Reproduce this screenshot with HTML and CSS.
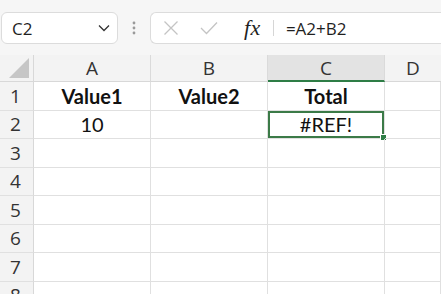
FILE: index.html
```html
<!DOCTYPE html>
<html lang="en">
<head>
  <meta charset="UTF-8" />
  <title>Sheet - #REF!</title>
  <link rel="stylesheet" href="styles.css">
</head>
<body>
  <div class="toolbar">
    <div class="namebox">
      <span>C2</span>
      <svg class="chev" width="12" height="8" viewBox="0 0 12 8"><path d="M1 1.5 L6 6.5 L11 1.5" fill="none" stroke="#333" stroke-width="1.3"/></svg>
    </div>
    <div class="grip">
      <svg width="4" height="14" viewBox="0 0 4 14"><circle cx="2" cy="2" r="1.4" fill="#9a9a9a"/><circle cx="2" cy="7" r="1.4" fill="#9a9a9a"/><circle cx="2" cy="12" r="1.4" fill="#9a9a9a"/></svg>
    </div>
    <div class="formula">
      <svg class="ico" width="16" height="16" viewBox="0 0 16 16"><path d="M1.5 1.5 L14.5 14.5 M14.5 1.5 L1.5 14.5" stroke="#c4c4c4" stroke-width="1.3"/></svg>
      <svg class="ico check" width="18" height="14" viewBox="0 0 18 14"><path d="M1 7 L6.5 12.5 L17 1.5" fill="none" stroke="#c4c4c4" stroke-width="1.3"/></svg>
      <span class="fx">fx</span>
      <span class="sep"></span>
      <span class="ftext">=A2+B2</span>
    </div>
  </div>

  <div class="sheet">
    <div class="corner"><span class="tri"></span></div>
    <div class="colhead">A</div>
    <div class="colhead">B</div>
    <div class="colhead active">C</div>
    <div class="colhead last">D</div>

    <div class="rowhead">1</div>
    <div class="cell bold">Value1</div>
    <div class="cell bold">Value2</div>
    <div class="cell bold">Total</div>
    <div class="cell"></div>

    <div class="rowhead">2</div>
    <div class="cell">10</div>
    <div class="cell"></div>
    <div class="cell selected">#REF!<span class="handle"></span></div>
    <div class="cell"></div>

    <div class="rowhead">3</div>
    <div class="cell"></div><div class="cell"></div><div class="cell"></div><div class="cell"></div>
    <div class="rowhead">4</div>
    <div class="cell"></div><div class="cell"></div><div class="cell"></div><div class="cell"></div>
    <div class="rowhead">5</div>
    <div class="cell"></div><div class="cell"></div><div class="cell"></div><div class="cell"></div>
    <div class="rowhead">6</div>
    <div class="cell"></div><div class="cell"></div><div class="cell"></div><div class="cell"></div>
    <div class="rowhead">7</div>
    <div class="cell"></div><div class="cell"></div><div class="cell"></div><div class="cell"></div>
    <div class="rowhead">8</div>
    <div class="cell"></div><div class="cell"></div><div class="cell"></div><div class="cell"></div>
  </div>
</body>
</html>
```

FILE: styles.css
```css
* { box-sizing: border-box; }
body { margin: 0; width: 441px; height: 294px; overflow: hidden; background: #fff; font-family: "Open Sans", sans-serif; color: #1f1f1f; }

.toolbar { height: 55px; background: #f6f6f6; display: flex; align-items: flex-start; padding: 12px 0 0 1px; }
.namebox { width: 117px; height: 32px; background: #fff; border: 1px solid #dcdcdc; border-radius: 6px; display: flex; align-items: center; justify-content: space-between; padding: 0 7px 0 10px; font-size: 17px; }
.grip { width: 32px; height: 32px; display: flex; align-items: center; justify-content: center; }
.formula { flex: 1; height: 32px; background: #fff; border: 1px solid #dcdcdc; border-right: none; border-radius: 6px 0 0 6px; display: flex; align-items: center; padding-left: 12px; margin-right: -10px; }
.ico { flex: none; }
.check { margin-left: 21px; }
.fx { font-family: "Liberation Serif", serif; font-style: italic; font-size: 22px; margin-left: 26px; letter-spacing: 0.5px; line-height: 1; }
.sep { width: 1px; height: 16px; background: #d6d6d6; margin-left: 12px; }
.ftext { font-size: 17px; margin-left: 12px; }

.sheet { display: grid; grid-template-columns: 34px 117px 117px 117px 1fr; grid-template-rows: 27px repeat(8, 28.5px); }
.corner { background: #f3f3f3; border-right: 1px solid #d8d8d8; border-bottom: 1px solid #d8d8d8; position: relative; }
.tri { position: absolute; right: 4px; bottom: 3px; width: 0; height: 0; border-left: 20px solid transparent; border-bottom: 20px solid #c6c6c6; }
.colhead { background: #f3f3f3; border-right: 1px solid #dadada; border-bottom: 1px solid #d8d8d8; display: flex; align-items: center; justify-content: center; font-size: 19px; color: #333; }
.colhead.active { background: #e3e3e3; border-bottom: 2px solid #2e7d46; }
.colhead.last { border-right: none; }
.rowhead { background: #f3f3f3; border-right: 1px solid #d8d8d8; border-bottom: 1px solid #e0e0e0; display: flex; align-items: center; padding-left: 10px; font-size: 19px; color: #333; }

.cell { border-right: 1px solid #e0e0e0; border-bottom: 1px solid #e0e0e0; display: flex; align-items: center; justify-content: center; font-family: Lato, sans-serif; font-size: 20px; color: #111; position: relative; }
.cell.bold { font-weight: bold; }
.cell.selected { box-shadow: inset 0 0 0 2px #3b7a47; }
.handle { position: absolute; right: -3px; bottom: -3px; width: 5px; height: 5px; background: #2e7d46; border: 1px solid #fff; box-sizing: content-box; }
```
